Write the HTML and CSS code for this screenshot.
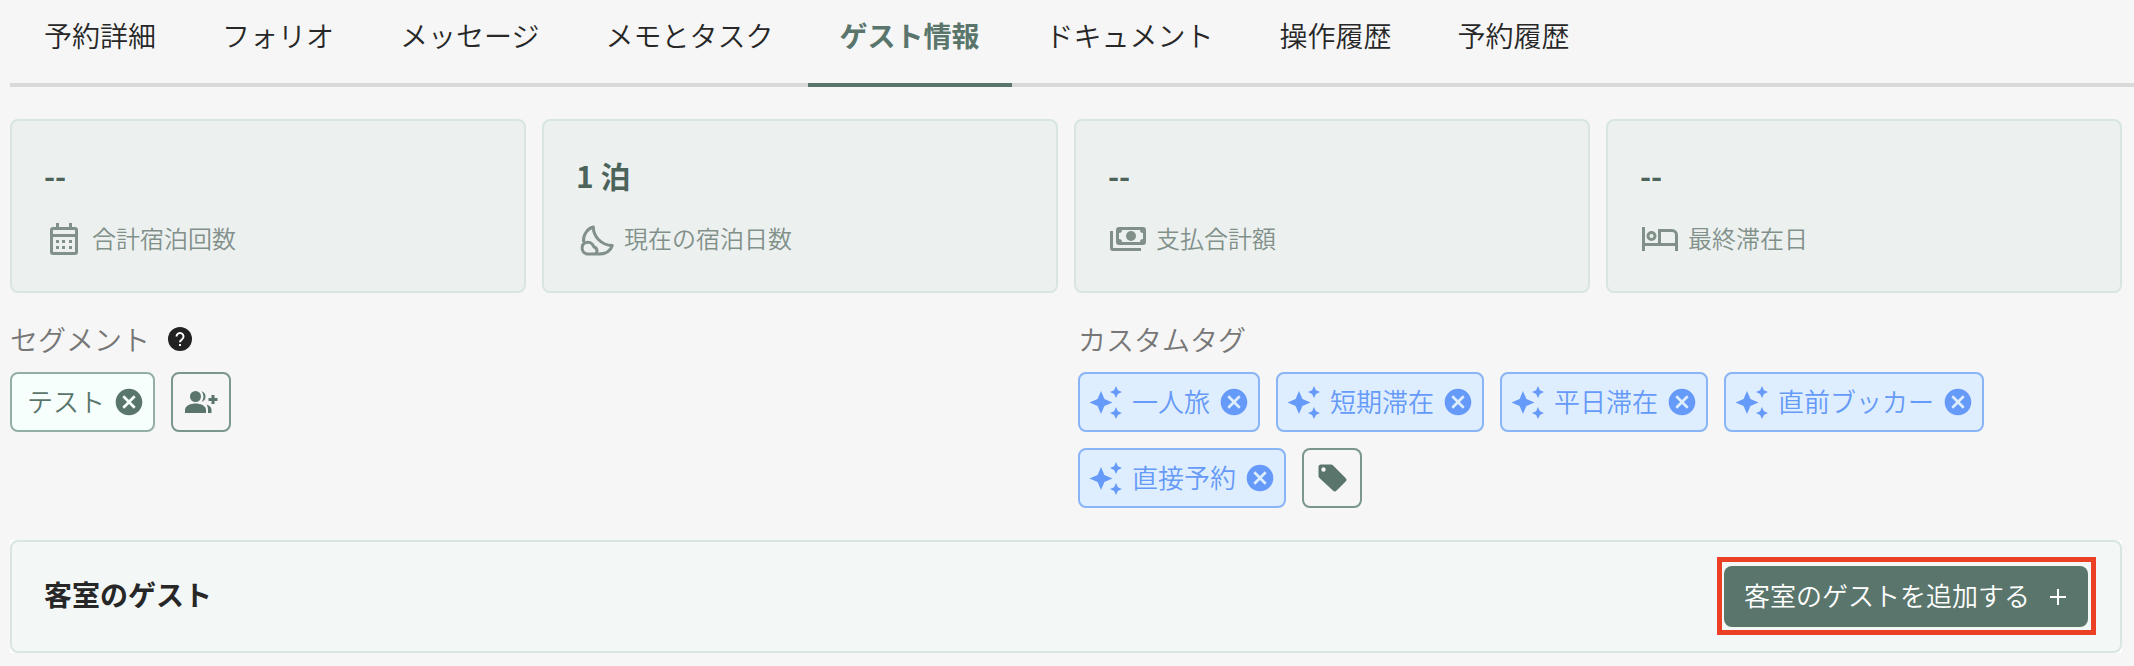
FILE: index.html
```
<!DOCTYPE html>
<html lang="ja">
<head>
    <meta charset="UTF-8">
    <meta name="viewport" content="width=device-width, initial-scale=1.0">
    <title>ゲスト情報</title>
    <link rel="stylesheet" href="styles.css">
</head>
<body>
    <!-- Shared icons -->
    <svg class="sprite" aria-hidden="true">
        <symbol id="icon-close" viewBox="0 0 24 24">
            <path d="M12 2C6.47 2 2 6.47 2 12s4.47 10 10 10 10-4.47 10-10S17.53 2 12 2zm5 13.59L15.59 17 12 13.41 8.41 17 7 15.59 10.59 12 7 8.41 8.41 7 12 10.59 15.59 7 17 8.41 13.41 12 17 15.59z"/>
        </symbol>
        <symbol id="icon-sparkle" viewBox="0 0 36 36">
            <path d="M13 7l3.400 8.100L24.500 18.500l-8.100 3.400L13 30l-3.400-8.100L1.500 18.500l8.100-3.400z"/>
            <path d="M28 2l1.900 4.200L34 8l-4.100 1.900L28 14l-1.900-4.100L22 8l4.100-1.800z"/>
            <path d="M28 23l1.900 4.200L34 29l-4.100 1.900L28 35l-1.900-4.100L22 29l4.100-1.800z"/>
        </symbol>
    </svg>

    <nav class="tabs">
        <a href="#" class="tab">予約詳細</a>
        <a href="#" class="tab">フォリオ</a>
        <a href="#" class="tab">メッセージ</a>
        <a href="#" class="tab">メモとタスク</a>
        <a href="#" class="tab active" aria-current="page">ゲスト情報</a>
        <a href="#" class="tab">ドキュメント</a>
        <a href="#" class="tab">操作履歴</a>
        <a href="#" class="tab">予約履歴</a>
    </nav>

    <main class="content">
        <section class="cards">
            <div class="card">
                <div class="value">--</div>
                <div class="label">
                    <svg class="label-icon" viewBox="0 0 40 36">
                        <path fill-rule="evenodd" d="M12 2h3v4h10V2h3v4h3a3 3 0 0 1 3 3v22a3 3 0 0 1-3 3H9a3 3 0 0 1-3-3V9a3 3 0 0 1 3-3h3zM9 9v4h22V9zM9 16v15h22V16z"/>
                        <path d="M12 19h3v3h-3zM18 19h3v3h-3zM25 19h3v3h-3zM12 25h3v3h-3zM18 25h3v3h-3zM25 25h3v3h-3z"/>
                    </svg>
                    <span>合計宿泊回数</span>
                </div>
            </div>
            <div class="card">
                <div class="value">1 泊</div>
                <div class="label">
                    <svg class="label-icon stroked" viewBox="0 0 40 36">
                        <path d="M7.500 21C7 13.500 11.500 7.500 17.300 6c0 9.500 8 18.500 19 18.500C34.500 30 29.500 33 23 33"/>
                        <path d="M11 33a6 6 0 0 1-1.500-11.300c3.500-1.200 7 .3 8.500 4.300A4 4 0 0 1 21 30c0 2-1 3-3 3zM17 33h6"/>
                    </svg>
                    <span>現在の宿泊日数</span>
                </div>
            </div>
            <div class="card">
                <div class="value">--</div>
                <div class="label">
                    <svg class="label-icon" viewBox="0 0 40 36">
                        <path fill-rule="evenodd" d="M11 6h24a3 3 0 0 1 3 3v12a3 3 0 0 1-3 3H11a3 3 0 0 1-3-3V9a3 3 0 0 1 3-3zm3 3a3 3 0 0 1-3 3v6a3 3 0 0 1 3 3h18a3 3 0 0 1 3-3v-6a3 3 0 0 1-3-3z"/>
                        <circle cx="23" cy="15" r="5"/>
                        <path d="M2 10h3v17h28v3H5a3 3 0 0 1-3-3z"/>
                    </svg>
                    <span>支払合計額</span>
                </div>
            </div>
            <div class="card">
                <div class="value">--</div>
                <div class="label">
                    <svg class="label-icon" viewBox="0 0 40 36">
                        <path fill-rule="evenodd" d="M2 6h3v16h13V8h14a6 6 0 0 1 6 6v16h-3v-5H5v5H2zM21 11v11h14v-8a3 3 0 0 0-3-3z"/>
                        <path fill-rule="evenodd" d="M11.500 10a5 5 0 0 1 0 10 5 5 0 0 1 0-10zm0 3a2 2 0 0 0 0 4 2 2 0 0 0 0-4z"/>
                    </svg>
                    <span>最終滞在日</span>
                </div>
            </div>
        </section>

        <section class="tag-groups">
            <div class="tag-group">
                <h2 class="group-title">
                    セグメント
                    <svg class="help-icon" viewBox="0 0 24 24" role="img" aria-label="ヘルプ">
                        <circle cx="12" cy="12" r="12"/>
                        <path d="M8.500 9.500a3.500 3.500 0 1 1 5.600 2.800C13 13.200 12 13.700 12 15.200"/>
                        <path d="M12 17v2"/>
                    </svg>
                </h2>
                <div class="tags">
                    <span class="tag segment">
                        <span>テスト</span>
                        <button type="button" class="remove" aria-label="テストを削除"><svg><use href="#icon-close"/></svg></button>
                    </span>
                    <button type="button" class="add-btn" aria-label="セグメントを追加">
                        <svg viewBox="0 0 36 36">
                            <circle cx="12.500" cy="12.500" r="5.500"/>
                            <path d="M2 29v-3c0-4.500 6-6.500 10.500-6.500S23 21.500 23 26v3z"/>
                            <path d="M18.500 7.200a5.500 5.500 0 0 1 0 10.600c2.600-3 2.600-7.600 0-10.600z"/>
                            <path d="M23.500 20.500c3.500 1 5 3 5 5.500v3H25v-3c0-2.200-.5-4-1.500-5.500z"/>
                            <path d="M28.500 11h3v3h3v3h-3v3h-3v-3h-3v-3h3z"/>
                        </svg>
                    </button>
                </div>
            </div>

            <div class="tag-group">
                <h2 class="group-title">カスタムタグ</h2>
                <div class="tags">
                    <span class="tag custom">
                        <svg class="sparkle"><use href="#icon-sparkle"/></svg>
                        <span>一人旅</span>
                        <button type="button" class="remove" aria-label="一人旅を削除"><svg><use href="#icon-close"/></svg></button>
                    </span>
                    <span class="tag custom">
                        <svg class="sparkle"><use href="#icon-sparkle"/></svg>
                        <span>短期滞在</span>
                        <button type="button" class="remove" aria-label="短期滞在を削除"><svg><use href="#icon-close"/></svg></button>
                    </span>
                    <span class="tag custom">
                        <svg class="sparkle"><use href="#icon-sparkle"/></svg>
                        <span>平日滞在</span>
                        <button type="button" class="remove" aria-label="平日滞在を削除"><svg><use href="#icon-close"/></svg></button>
                    </span>
                    <span class="tag custom">
                        <svg class="sparkle"><use href="#icon-sparkle"/></svg>
                        <span>直前ブッカー</span>
                        <button type="button" class="remove" aria-label="直前ブッカーを削除"><svg><use href="#icon-close"/></svg></button>
                    </span>
                    <span class="tag custom">
                        <svg class="sparkle"><use href="#icon-sparkle"/></svg>
                        <span>直接予約</span>
                        <button type="button" class="remove" aria-label="直接予約を削除"><svg><use href="#icon-close"/></svg></button>
                    </span>
                    <button type="button" class="add-btn" aria-label="タグを追加">
                        <svg viewBox="0 0 36 36">
                            <path fill-rule="evenodd" d="M7 4.500h10c.8 0 1.500.3 2.100.9l12.500 12.500c1.200 1.200 1.200 2.500 0 3.700l-9 9c-1.200 1.200-2.500 1.200-3.700 0L5.400 18.100c-.6-.6-.9-1.300-.9-2.100V7A2.500 2.500 0 0 1 7 4.500zM9.500 7.300a2.200 2.200 0 1 0 0 4.400 2.200 2.200 0 0 0 0-4.400z"/>
                        </svg>
                    </button>
                </div>
            </div>
        </section>

        <section class="guests">
            <div class="guests-header">
                <h2 class="guests-title">客室のゲスト</h2>
                <div class="highlight">
                    <button type="button" class="primary-btn">
                        <span>客室のゲストを追加する</span>
                        <svg viewBox="0 0 24 24"><path d="M12 4v16M4 12h16"/></svg>
                    </button>
                </div>
            </div>
        </section>
    </main>
</body>
</html>
```
FILE: styles.css
```
* {
    box-sizing: border-box;
}
body {
    margin: 0;
    padding-left: 10px;
    background: #f6f6f6;
    color: #272727;
    font-family: "Noto Sans CJK JP", sans-serif;
    font-size: 28px;
    font-weight: 350;
}
h2 {
    margin: 0;
}
button {
    font: inherit;
    cursor: pointer;
}
svg {
    display: block;
    flex: none;
    fill: currentColor;
}
.sprite {
    position: absolute;
    width: 0;
    height: 0;
}

/* Tabs */
.tabs {
    display: flex;
    gap: 2px;
    padding-left: 2px;
    box-shadow: inset 0 -4px #d9d9d9;
}
.tab {
    padding: 15px 32px 28px;
    border-bottom: 4px solid transparent;
    color: inherit;
    line-height: 40px;
    text-decoration: none;
    white-space: nowrap;
}
.tab.active {
    border-color: #5a766c;
    color: #5a766c;
    font-weight: bold;
}

.content {
    padding: 32px 12px 12px 0;
}

/* Summary cards */
.cards {
    display: grid;
    grid-template-columns: repeat(4, 1fr);
    gap: 16px;
}
.card {
    padding: 30px 32px 34px;
    border: 2px solid #d8e5e0;
    border-radius: 8px;
    background: #ecf1f0;
}
.value {
    color: #4b6359;
    font-size: 30px;
    font-weight: bold;
    line-height: 48px;
}
.label {
    display: flex;
    align-items: center;
    gap: 8px;
    margin-top: 22px;
    color: #82908a;
    font-size: 24px;
    line-height: 36px;
}
.label span {
    margin-top: -2px;
}
.label-icon {
    width: 40px;
    height: 36px;
}
.label-icon.stroked {
    fill: none;
    stroke: currentColor;
    stroke-width: 3;
    stroke-linejoin: round;
}

/* Segments and custom tags */
.tag-groups {
    display: grid;
    grid-template-columns: 1fr 1fr;
    gap: 24px;
    margin-top: 26px;
}
.group-title {
    display: flex;
    align-items: center;
    gap: 18px;
    margin-bottom: 13px;
    color: #777;
    font-size: 28px;
    font-weight: 350;
    line-height: 40px;
}
.help-icon {
    width: 24px;
    height: 24px;
    fill: none;
    stroke: #fff;
    stroke-width: 2;
}
.help-icon circle {
    fill: #222;
    stroke: none;
}
.tags {
    display: flex;
    flex-wrap: wrap;
    gap: 16px;
}
.tag {
    display: flex;
    align-items: center;
    gap: 8px;
    height: 60px;
    padding: 0 8px;
    border: 2px solid;
    border-radius: 8px;
    font-size: 26px;
    white-space: nowrap;
}
.tag span,
.primary-btn span {
    padding-bottom: 4px;
}
.tag.segment {
    padding-left: 15px;
    border-color: #93afa5;
    background: #f7fffd;
    color: #5a766c;
}
.tag.custom {
    border-color: #8ab4f8;
    background: #dfeefe;
    color: #669af8;
}
.sparkle {
    width: 36px;
    height: 36px;
}
.remove {
    padding: 0;
    border: 0;
    background: none;
    color: inherit;
}
.remove svg {
    width: 32px;
    height: 32px;
}
.add-btn {
    display: flex;
    align-items: center;
    justify-content: center;
    width: 60px;
    height: 60px;
    padding: 0;
    border: 2px solid #7b968c;
    border-radius: 8px;
    background: #f6f6f6;
    color: #5a766c;
}
.add-btn svg {
    width: 36px;
    height: 36px;
}

/* Guests in the room */
.guests {
    margin-top: 32px;
    background: #fff;
}
.guests-header {
    display: flex;
    align-items: center;
    justify-content: space-between;
    padding: 15px 24px 16px 32px;
    border: 2px solid #d8e5e0;
    border-radius: 8px;
    background: #f3f7f6;
}
.guests-title {
    padding-bottom: 4px;
    font-size: 28px;
    line-height: 40px;
}
.highlight {
    padding: 4px 3px 3px 2px;
    border: 5px solid #ec4025;
}
.primary-btn {
    display: flex;
    align-items: center;
    gap: 16px;
    height: 61px;
    padding: 0 18px 0 20px;
    border: 0;
    border-radius: 8px;
    background: #5a766c;
    color: #fff;
    font-size: 26px;
}
.primary-btn svg {
    width: 24px;
    height: 24px;
    stroke: currentColor;
    stroke-width: 2;
}
```
